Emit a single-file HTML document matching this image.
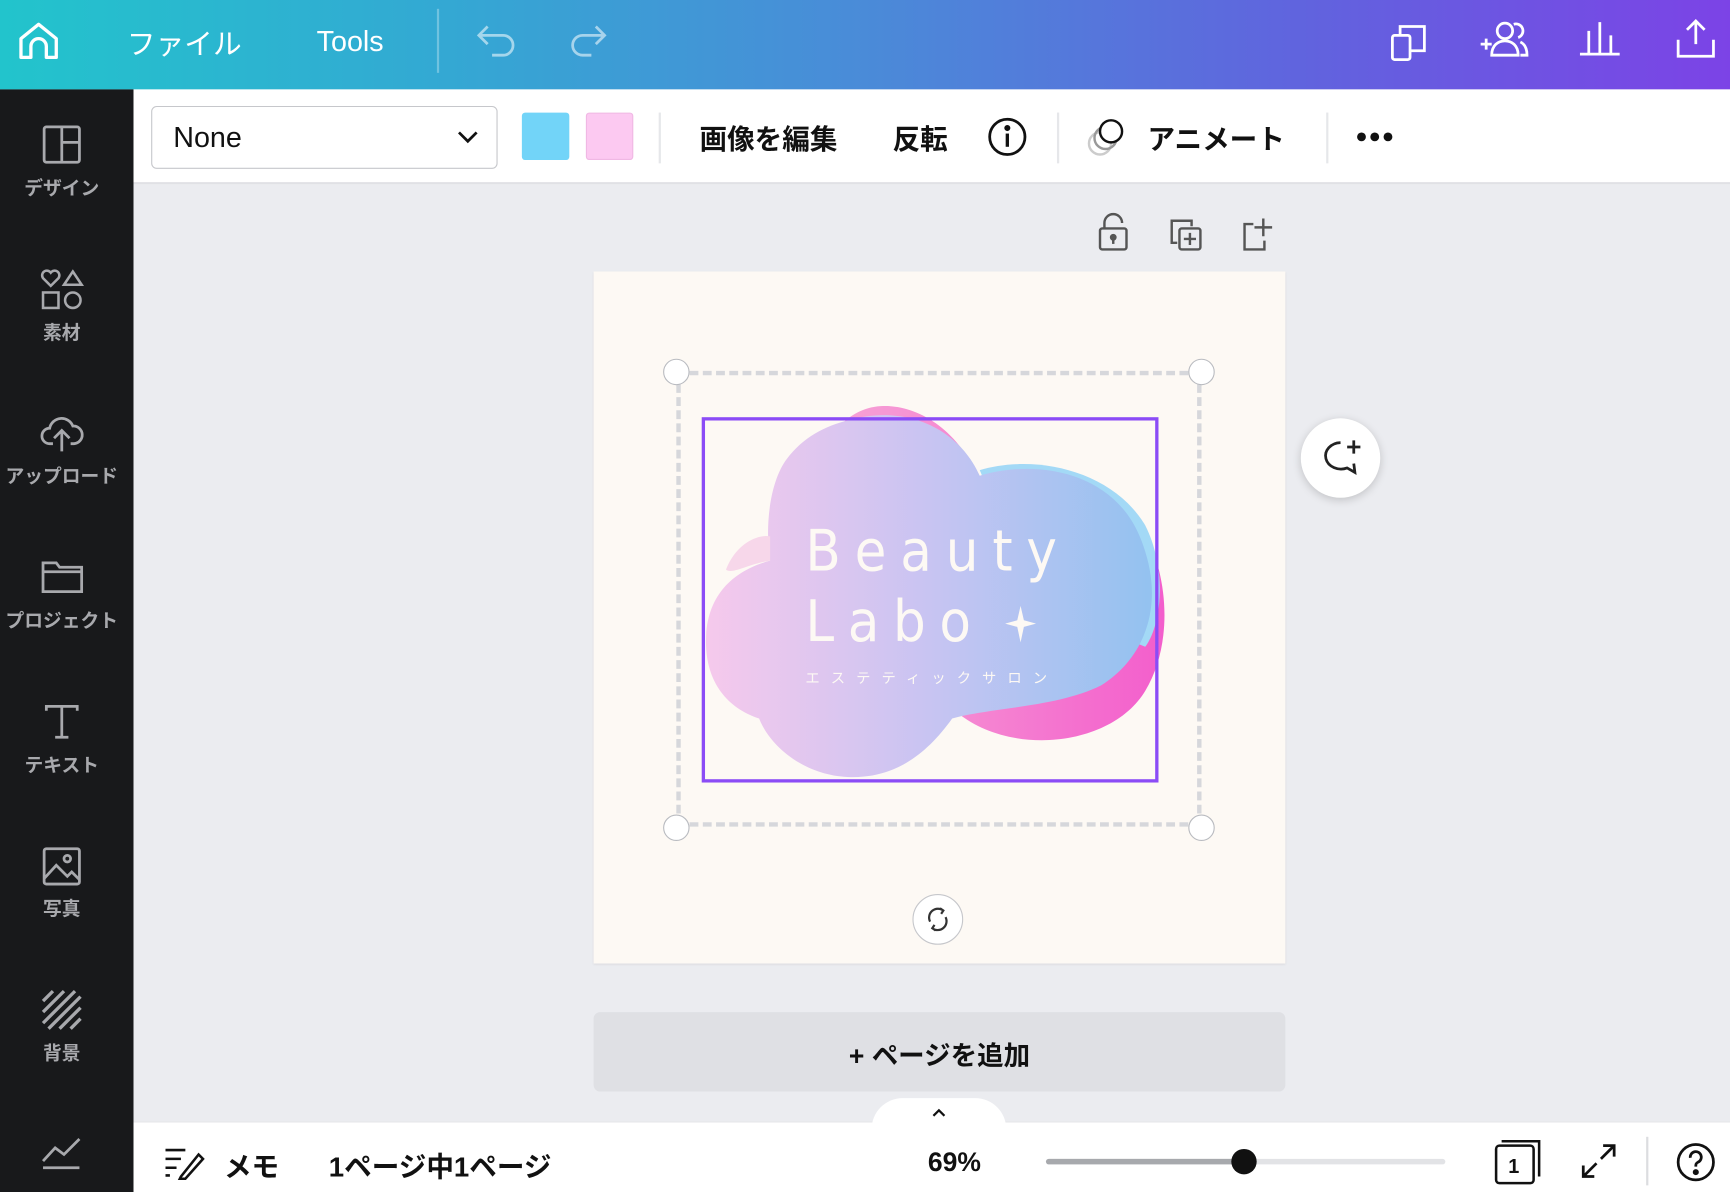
<!DOCTYPE html>
<html><head><meta charset="utf-8">
<style>
html,body{margin:0;padding:0;width:1730px;height:1192px;overflow:hidden;background:#ebecf0}
#w{position:absolute;left:0;top:0;width:1568px;height:1080px;transform:scale(1.10332,1.10370);transform-origin:0 0;font-family:"Liberation Sans","Noto Sans CJK JP",sans-serif;background:#ebecf0;overflow:hidden}
.a{position:absolute}
.top{left:0;top:0;width:1568px;height:81px;background:linear-gradient(90deg,#22c4cc 0%,#33a9d3 25%,#4a8bd8 50%,#6064de 75%,#7c43e6 100%)}
.tt{color:#fff;font-size:26px;font-weight:bold;top:20px}
.side{left:0;top:81px;width:121px;height:999px;background:#18191b}
.sl{width:112px;text-align:center;color:#a8a9ad;font-size:17px;font-weight:bold;left:0}
.tb{left:121px;top:81px;width:1447px;height:86px;background:#fff;border-bottom:2px solid #e0e1e5;box-sizing:border-box}
.bt{font-size:25px;font-weight:bold;color:#111;top:107px}
svg{position:absolute;overflow:visible}
</style></head><body><div id="w">
<div class="a top"></div>
<svg style="left:16px;top:20px" width="38" height="36" viewBox="0 0 38 36" fill="none" stroke="#fff" stroke-width="3" stroke-linejoin="round"><path d="M3 15 L19 2 L35 15 V32 H26 V22 a7 7 0 0 0 -14 0 V32 H3 Z"/></svg>
<div class="a tt" style="left:115px;font-weight:normal">ファイル</div>
<div class="a tt" style="left:287px;top:22px;font-weight:normal">Tools</div>
<div class="a" style="left:396px;top:8px;width:2px;height:58px;background:rgba(255,255,255,.3)"></div>
<svg style="left:432px;top:22px" width="36" height="30" fill="none" stroke="rgba(255,255,255,.55)" stroke-width="2.5"><path d="M10 2 L2 10 L10 18 M2 10 H24 a9 9 0 0 1 0 18 H14"/></svg>
<svg style="left:516px;top:22px" width="36" height="30" fill="none" stroke="rgba(255,255,255,.55)" stroke-width="2.5"><path d="M24 2 L32 10 L24 18 M32 10 H12 a9 9 0 0 0 0 18 H20"/></svg>
<svg style="left:1260px;top:20px" width="34" height="36" fill="none" stroke="#fff" stroke-width="2.5"><rect x="2" y="12" width="16" height="22" rx="2"/><path d="M9 12 V4 h22 v22 h-13"/></svg>
<svg style="left:1340px;top:18px" width="48" height="36" fill="none" stroke="#fff" stroke-width="2.5"><circle cx="24" cy="10" r="7"/><path d="M12 32 c0-9 6-13 12-13 s12 4 12 13 Z"/><path d="M32 4 a6 6 0 0 1 4 12 M38 20 c4 2 6 6 6 12 h-6"/><path d="M2 22 h10 M7 17 v10"/></svg>
<svg style="left:1430px;top:18px" width="40" height="34" fill="none" stroke="#fff" stroke-width="2.5"><path d="M2 31 H38 M10 31 V10 M20 31 V2 M30 31 V14"/></svg>
<svg style="left:1519px;top:16px" width="36" height="38" fill="none" stroke="#fff" stroke-width="2.5"><path d="M18 24 V3 M10 11 L18 3 L26 11 M2 20 V35 H34 V20"/></svg>

<div class="a side"></div>
<svg style="left:39px;top:114px" width="34" height="34" fill="none" stroke="#a8a9ad" stroke-width="2.5"><rect x="1" y="1" width="32" height="32" rx="2"/><path d="M17 1 V33 M17 15 H33"/></svg>
<div class="a sl" style="top:156px">デザイン</div>
<svg style="left:37px;top:244px" width="40" height="38" fill="none" stroke="#a8a9ad" stroke-width="2.3"><path d="M9 15 L2 8 a4 4 0 0 1 7-5 a4 4 0 0 1 7 5 Z"/><path d="M29 2 L37 14 H21 Z"/><rect x="2" y="21" width="14" height="14"/><circle cx="29" cy="28" r="7"/></svg>
<div class="a sl" style="top:287px">素材</div>
<svg style="left:36px;top:376px" width="40" height="34" fill="none" stroke="#a8a9ad" stroke-width="2.5"><path d="M12 26 H9 a7 7 0 0 1 0-14 a11 11 0 0 1 21-2 a8 8 0 0 1 1 16 H28 M20 33 V15 M13 21 L20 14 L27 21"/></svg>
<div class="a sl" style="top:417px">アップロード</div>
<svg style="left:38px;top:508px" width="38" height="30" fill="none" stroke="#a8a9ad" stroke-width="2.5"><path d="M1 28 V2 H13 L16 6 H36 V28 Z M1 10 H36"/></svg>
<div class="a sl" style="top:548px">プロジェクト</div>
<svg style="left:40px;top:638px" width="32" height="32" fill="none" stroke="#a8a9ad" stroke-width="2.5"><path d="M2 6 V2 H30 V6 M16 2 V30 M10 30 H22"/></svg>
<div class="a sl" style="top:679px">テキスト</div>
<svg style="left:39px;top:768px" width="34" height="34" fill="none" stroke="#a8a9ad" stroke-width="2.5"><rect x="1" y="1" width="32" height="32" rx="2"/><circle cx="22" cy="10" r="3"/><path d="M1 28 L12 16 L22 26 L26 22 L33 29"/></svg>
<div class="a sl" style="top:809px">写真</div>
<svg style="left:38px;top:897px" width="36" height="36" fill="none" stroke="#a8a9ad" stroke-width="3"><path d="M1 10 L10 1 M1 20 L20 1 M1 30 L30 1 M6 35 L35 6 M16 35 L35 16 M26 35 L35 26"/></svg>
<div class="a sl" style="top:940px">背景</div>
<svg style="left:38px;top:1030px" width="36" height="30" fill="none" stroke="#a8a9ad" stroke-width="2.5"><path d="M1 22 L12 10 L20 16 L34 2 M1 28 H34"/></svg>

<div class="a tb"></div>
<div class="a" style="left:137px;top:96px;width:312px;height:55px;border:1.5px solid #c6c7cb;border-radius:5px;background:#fff"></div>
<div class="a" style="left:157px;top:109px;font-size:26px;color:#111">None</div>
<svg style="left:415px;top:118px" width="18" height="12" fill="none" stroke="#111" stroke-width="2.5"><path d="M1 2 L9 10 L17 2"/></svg>
<div class="a" style="left:473px;top:102px;width:43px;height:43px;background:#72d4f8;border-radius:3px"></div>
<div class="a" style="left:531px;top:102px;width:43px;height:43px;background:#fcc9f1;border:1px solid #f0b8e4;box-sizing:border-box;border-radius:3px"></div>
<div class="a" style="left:597px;top:102px;width:2px;height:46px;background:#e6e7ea"></div>
<div class="a bt" style="left:634px">画像を編集</div>
<div class="a bt" style="left:809px">反転</div>
<svg style="left:895px;top:106px" width="36" height="36" fill="none" stroke="#111" stroke-width="2.5"><circle cx="18" cy="18" r="16"/><path d="M18 15 V27" stroke-width="3"/><circle cx="18" cy="10" r="1.5" fill="#111"/></svg>
<div class="a" style="left:958px;top:102px;width:2px;height:46px;background:#e6e7ea"></div>
<svg style="left:984px;top:104px" width="40" height="40" fill="none" stroke-width="2.2"><circle cx="13" cy="26" r="10" stroke="#ccc"/><circle cx="18" cy="21" r="10" stroke="#999"/><circle cx="23" cy="15" r="10" stroke="#111" fill="#fff"/></svg>
<div class="a bt" style="left:1040px">アニメート</div>
<div class="a" style="left:1202px;top:102px;width:2px;height:46px;background:#e6e7ea"></div>
<svg style="left:1229px;top:119px" width="36" height="10"><circle cx="5" cy="5" r="4" fill="#111"/><circle cx="17" cy="5" r="4" fill="#111"/><circle cx="29" cy="5" r="4" fill="#111"/></svg>

<svg style="left:996px;top:194px" width="26" height="34" fill="none" stroke="#555" stroke-width="2.2"><rect x="1" y="13" width="24" height="19" rx="2"/><path d="M5 13 V8 a8 8 0 0 1 16 0"/><circle cx="13" cy="21" r="2" fill="#555"/><path d="M13 22 V27"/></svg>
<svg style="left:1060px;top:198px" width="30" height="30" fill="none" stroke="#555" stroke-width="2.2"><path d="M7 22 H2 V2 H20 V7"/><rect x="9" y="9" width="19" height="19" rx="2"/><path d="M18.5 13 V24 M13 18.5 H24"/></svg>
<svg style="left:1126px;top:196px" width="30" height="32" fill="none" stroke="#555" stroke-width="2.2"><path d="M10 7 H2 V30 H20 V22 M19 2 V18 M11 10 H27"/></svg>

<div class="a" style="left:538px;top:246px;width:627px;height:627px;background:#fdf9f4;box-shadow:0 1px 2px rgba(0,0,0,.08)"></div>
<svg style="left:538px;top:246px" width="627" height="627">
<defs>
<linearGradient id="g1" x1="0" x2="1"><stop offset="0" stop-color="#f6c9ec"/><stop offset=".5" stop-color="#c8c4f2"/><stop offset="1" stop-color="#93c2f0"/></linearGradient>
<linearGradient id="g2" x1="0" x2="1"><stop offset="0" stop-color="#f7a7d6"/><stop offset="1" stop-color="#f35ecc"/></linearGradient>
</defs>
<path d="M330 400 C380 440 470 430 500 380 C530 330 520 250 480 210 C450 180 400 170 350 190 C330 140 290 120 260 122 C230 124 210 150 200 180 Z" fill="url(#g2)"/>
<path d="M350 180 C400 165 470 180 500 230 C520 270 515 320 500 340 L400 300 Z" fill="#a3d9f6"/>
<path d="M230 135 C280 120 330 140 350 185 C400 170 470 180 495 240 C520 300 500 350 460 375 C420 395 360 395 325 405 C300 440 270 460 230 458 C190 456 160 430 150 405 C120 395 100 370 102 330 C104 290 130 270 160 262 C155 230 160 190 175 170 C190 150 210 140 230 135 Z" fill="url(#g1)"/>
<path d="M120 270 C130 245 150 238 160 240 L160 262 C140 265 125 275 120 270Z" fill="#f7d7ea"/>
<g font-family="DejaVu Sans,sans-serif" font-weight="normal" fill="#fdf9f4" font-size="52" style="font-stretch:condensed">
<text x="192" y="271" textLength="228" lengthAdjust="spacing">Beauty</text>
<text x="192" y="335" textLength="150" lengthAdjust="spacing">Labo</text>
</g>
<path d="M387 303 L390 316 L401 319 L390 322 L387 336 L384 322 L373 319 L384 316 Z" fill="#fdf9f4"/>
<text x="192" y="373" font-family="Noto Sans CJK JP,sans-serif" font-size="13" fill="#fdf9f4" letter-spacing="10">エステティックサロン</text>
</svg>
<div class="a" style="left:613px;top:336px;width:476px;height:413px;border:4px dashed #d6d7db;box-sizing:border-box"></div>
<div class="a" style="left:636px;top:378px;width:414px;height:331px;border:3px solid #8b4cf6;box-sizing:border-box"></div>
<div class="a" style="left:601px;top:325px;width:22px;height:22px;border-radius:50%;background:#fff;border:1.5px solid #b9bbc0"></div>
<div class="a" style="left:1077px;top:325px;width:22px;height:22px;border-radius:50%;background:#fff;border:1.5px solid #b9bbc0"></div>
<div class="a" style="left:601px;top:738px;width:22px;height:22px;border-radius:50%;background:#fff;border:1.5px solid #b9bbc0"></div>
<div class="a" style="left:1077px;top:738px;width:22px;height:22px;border-radius:50%;background:#fff;border:1.5px solid #b9bbc0"></div>
<div class="a" style="left:827px;top:810px;width:44px;height:44px;border-radius:50%;background:#fff;border:1.5px solid #c6c7cb"></div>
<svg style="left:838px;top:821px" width="24" height="24" fill="none" stroke="#333" stroke-width="2"><path d="M5 14 a8 8 0 0 1 12-10 M19 10 a8 8 0 0 1 -12 10 M14 2 l3 2 -2 3 M10 22 l-3-2 2-3"/></svg>
<div class="a" style="left:1179px;top:379px;width:72px;height:72px;border-radius:50%;background:#fff;box-shadow:0 2px 8px rgba(0,0,0,.18)"></div>
<svg style="left:1197px;top:397px" width="40" height="38" fill="none" stroke="#222" stroke-width="2.5"><path d="M18 4 a14 12 0 1 0 6 23 l7 4 -1-8"/><path d="M30 2 V14 M24 8 H36"/></svg>

<div class="a" style="left:538px;top:917px;width:627px;height:72px;background:#dfe0e4;border-radius:6px"></div>
<div class="a" style="left:538px;top:937px;width:627px;text-align:center;font-size:24px;font-weight:bold;color:#111">+ ページを追加</div>

<div class="a" style="left:121px;top:1016px;width:1447px;height:64px;background:#fff;border-top:1px solid #e3e4e7"></div>
<div class="a" style="left:790px;top:995px;width:122px;height:30px;background:#fff;border-radius:28px 28px 0 0"></div>
<svg style="left:845px;top:1004px" width="12" height="8" fill="none" stroke="#111" stroke-width="2"><path d="M1 7 L6 2 L11 7"/></svg>
<svg style="left:148px;top:1038px" width="38" height="30" fill="none" stroke="#111" stroke-width="2.3"><path d="M2 4 H20 M2 12 H16 M2 20 H12 M2 27 H6 M16 28 L32 8 L36 12 L20 30 H15 Z"/></svg>
<div class="a" style="left:203px;top:1038px;font-size:25px;font-weight:bold;color:#111">メモ</div>
<div class="a" style="left:298px;top:1038px;font-size:25px;font-weight:bold;color:#111">1ページ中1ページ</div>
<div class="a" style="left:841px;top:1040px;font-size:24px;font-weight:bold;color:#111">69%</div>
<div class="a" style="left:948px;top:1050px;width:362px;height:5px;background:#e2e3e6;border-radius:3px"></div>
<div class="a" style="left:948px;top:1050px;width:180px;height:5px;background:#a7a9ad;border-radius:3px"></div>
<div class="a" style="left:1116px;top:1041px;width:23px;height:23px;border-radius:50%;background:#111"></div>
<svg style="left:1355px;top:1032px" width="42" height="42" fill="none" stroke="#111" stroke-width="2.3"><rect x="1" y="6" width="34" height="34" rx="3"/><path d="M6 2 H40 V34"/><text x="12" y="31" font-size="18" font-family="Liberation Sans,sans-serif" fill="#111" stroke="none" font-weight="bold">1</text></svg>
<svg style="left:1433px;top:1036px" width="32" height="32" fill="none" stroke="#111" stroke-width="2.5"><path d="M20 2 H30 V12 M30 2 L18 14 M12 30 H2 V20 M2 30 L14 18"/></svg>
<div class="a" style="left:1492px;top:1030px;width:2px;height:44px;background:#dcdde0"></div>
<svg style="left:1519px;top:1035px" width="36" height="36" fill="none" stroke="#111" stroke-width="2.5"><circle cx="18" cy="18" r="16"/><path d="M13 14 a5 5 0 1 1 7 4 c-2 1-2 2-2 4"/><circle cx="18" cy="27" r="1.5" fill="#111"/></svg>
</div></body></html>
